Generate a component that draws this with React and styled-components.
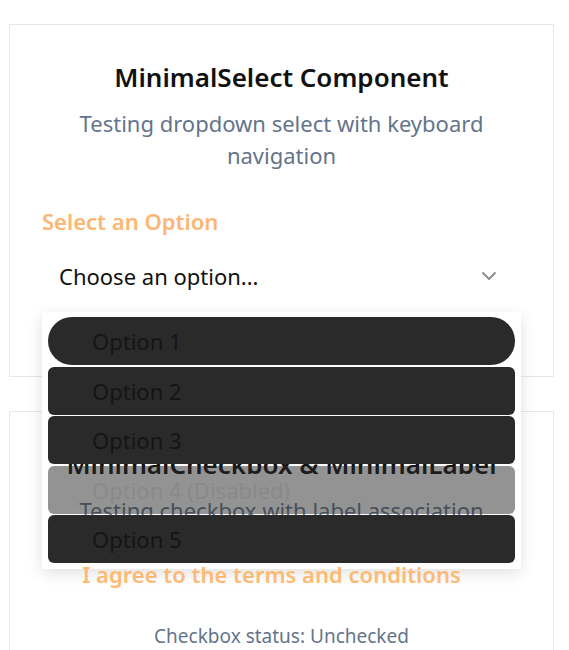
import { useState } from "react"
import styled, { createGlobalStyle } from "styled-components"
import { ChevronDown } from "lucide-react"

const GlobalStyle = createGlobalStyle`
    body {
        margin: 0;
        background: #ffffff;
        font-family: "Noto Sans", "Open Sans", sans-serif;
    }
`

const options = [
    { value: "1", label: "Option 1" },
    { value: "2", label: "Option 2" },
    { value: "3", label: "Option 3" },
    { value: "4", label: "Option 4 (Disabled)", disabled: true },
    { value: "5", label: "Option 5" },
]

const App = () => {
    const [checked, setChecked] = useState(false)

    return (
        <>
            <GlobalStyle />
            <Page>
                <Card>
                    <Title>MinimalSelect Component</Title>
                    <Subtitle>Testing dropdown select with keyboard navigation</Subtitle>
                    <FieldLabel htmlFor="demo-select">Select an Option</FieldLabel>
                    <SelectWrap>
                        <Trigger id="demo-select" type="button">
                            <span>Choose an option...</span>
                            <ChevronDown size={24} strokeWidth={1.8} color="#8a8a8a" />
                        </Trigger>
                        <Panel role="listbox">
                            {options.map((opt, i) => (
                                <OptionItem
                                    key={opt.value}
                                    role="option"
                                    $active={i === 0}
                                    $disabled={opt.disabled}
                                >
                                    {opt.label}
                                </OptionItem>
                            ))}
                        </Panel>
                    </SelectWrap>
                </Card>

                <Card>
                    <Content>
                        <Title>MinimalCheckbox &amp; MinimalLabel</Title>
                        <Subtitle>Testing checkbox with label association</Subtitle>
                        <CheckRow>
                            <CheckLabel htmlFor="terms">
                                I agree to the terms and conditions
                            </CheckLabel>
                            <CheckBox
                                type="checkbox"
                                id="terms"
                                checked={checked}
                                onChange={(e) => setChecked(e.target.checked)}
                            />
                        </CheckRow>
                        <Status>Checkbox status: {checked ? "Checked" : "Unchecked"}</Status>
                    </Content>
                </Card>
            </Page>
        </>
    )
}

export default App

const Page = styled.div`
    display: flex;
    flex-direction: column;
    gap: 34px;
    width: 545px;
    padding: 24px 0 24px 9px;
`

const Card = styled.section`
    background: #ffffff;
    border: 1px solid #e2e8f0;
    padding: 32px;
    display: flex;
    flex-direction: column;
`

const Content = styled.div`
    position: relative;
    z-index: 2;
    display: flex;
    flex-direction: column;
`

const Title = styled.h2`
    margin: 0 0 10px;
    font-size: 26px;
    font-weight: 600;
    line-height: 40px;
    color: #111111;
    text-align: center;
`

const Subtitle = styled.p`
    margin: 0 0 32px;
    font-size: 22px;
    line-height: 32px;
    color: #64748b;
    text-align: center;
`

const FieldLabel = styled.label`
    font-size: 22px;
    font-weight: 600;
    line-height: 36px;
    color: #fdb673;
    margin-bottom: 9px;
`

const SelectWrap = styled.div`
    position: relative;
    margin-bottom: 40px;
`

const Trigger = styled.button`
    width: 100%;
    height: 56px;
    display: flex;
    align-items: center;
    justify-content: space-between;
    padding: 0 20px 0 17px;
    border: none;
    background: transparent;
    font-family: inherit;
    font-size: 22px;
    color: #111111;
    cursor: pointer;
`

const Panel = styled.div`
    position: absolute;
    top: 64px;
    left: 0;
    right: 0;
    padding: 5px 6px 6px;
    background: #ffffff;
    box-shadow: 0 4px 14px rgba(0, 0, 0, 0.12);
    display: flex;
    flex-direction: column;
    gap: 1.5px;
`

const OptionItem = styled.div`
    position: relative;
    z-index: 3;
    height: 48px;
    display: flex;
    align-items: center;
    padding-left: 44px;
    background: #2a2a2a;
    border-radius: ${(props) => (props.$active ? "24px" : "6px")};
    font-size: 22px;
    color: #151515;
    opacity: ${(props) => (props.$disabled ? 0.5 : 1)};
    cursor: ${(props) => (props.$disabled ? "not-allowed" : "pointer")};
`

const CheckRow = styled.div`
    display: flex;
    align-items: center;
    justify-content: center;
    gap: 4px;
    margin-bottom: 32px;
`

const CheckBox = styled.input`
    appearance: none;
    width: 16px;
    height: 16px;
    margin: 0;
    border: none;
    background: transparent;
`

const CheckLabel = styled.label`
    font-size: 22px;
    font-weight: 600;
    line-height: 32px;
    color: #fdba74;
`

const Status = styled.p`
    margin: 0;
    font-size: 19px;
    line-height: 28px;
    color: #64748b;
    text-align: center;
`
